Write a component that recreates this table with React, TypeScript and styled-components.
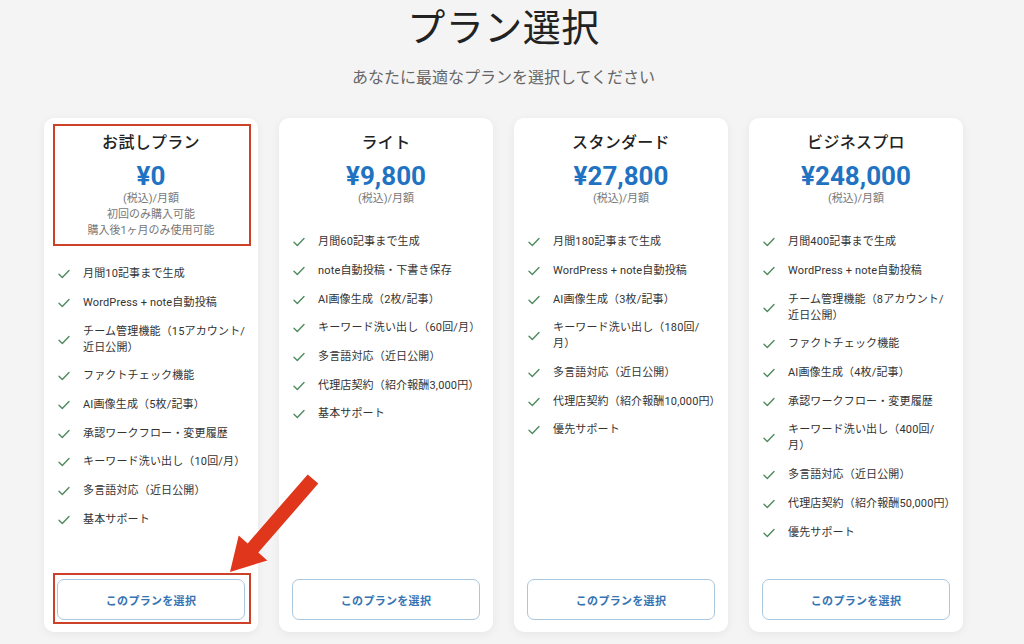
import React from "react";
import styled, { createGlobalStyle, css } from "styled-components";

const GlobalStyle = createGlobalStyle`
  html, body { margin: 0; padding: 0; }
  body {
    background: #f4f4f4;
    font-family: Roboto, "Noto Sans CJK JP", "Noto Sans", sans-serif;
    color: #333;
  }
`;

const Page = styled.div`
  position: relative;
  width: 1007px;
  height: 644px;
  padding-top: 5px;
  box-sizing: border-box;
  display: flex;
  flex-direction: column;
  align-items: center;
  overflow: hidden;
`;

const Title = styled.h1`
  margin: 0;
  font-size: 38px;
  line-height: 46px;
  font-weight: 400;
  color: #222;
  letter-spacing: 0.5px;
`;

const Subtitle = styled.p`
  margin: 15px 0 0;
  font-size: 16px;
  line-height: 24px;
  color: #666;
`;

const Cards = styled.div`
  margin-top: 28px;
  display: grid;
  grid-template-columns: repeat(4, 214px);
  gap: 21px;
  align-items: stretch;
`;

const Card = styled.div`
  background: #fff;
  border-radius: 10px;
  box-shadow: 0 2px 10px rgba(0, 0, 0, 0.06);
  padding: 14px 14px 12px;
  display: flex;
  flex-direction: column;
  height: 514px;
  box-sizing: border-box;
`;

const annotation = css`
  &::after {
    content: "";
    position: absolute;
    border: 2px solid #cc4128;
    pointer-events: none;
  }
`;

const Header = styled.div<{ $marked?: boolean }>`
  position: relative;
  display: flex;
  flex-direction: column;
  align-items: center;
  text-align: center;
  ${(p) =>
    p.$marked &&
    css`
      ${annotation}
      &::after {
        top: -8px;
        bottom: -7px;
        left: -5px;
        right: -7px;
      }
    `}
`;

const PlanName = styled.div`
  font-size: 16px;
  line-height: 22px;
  font-weight: 500;
  color: #222;
  letter-spacing: 0.3px;
`;

const Price = styled.div`
  margin-top: 8px;
  font-size: 26px;
  line-height: 29px;
  font-weight: 700;
  color: #1f73c2;
`;

const Note = styled.div`
  font-size: 11px;
  line-height: 16px;
  color: #777;
`;

const Features = styled.ul`
  list-style: none;
  margin: 21px -12px 32px 0;
  padding: 0;
`;

const Feature = styled.li`
  display: flex;
  align-items: center;
  gap: 13px;
  padding: 6.35px 0;
  font-size: 11px;
  line-height: 16px;
  color: #333;
`;

const Check = styled.svg`
  flex: 0 0 12px;
  width: 12px;
  height: 10px;
`;

const FeatureText = styled.span`
  flex: 1;
  min-width: 0;
  white-space: pre-line;
  letter-spacing: 0.15px;
`;

const SelectButton = styled.button<{ $marked?: boolean }>`
  position: relative;
  margin: auto -1px 0;
  height: 41px;
  border: 1px solid #a9c7de;
  border-radius: 7px;
  background: #fff;
  color: #3574b3;
  font-family: Roboto, "Noto Sans CJK JP", sans-serif;
  font-size: 11px;
  font-weight: 600;
  letter-spacing: 0.3px;
  cursor: pointer;
  ${(p) =>
    p.$marked &&
    css`
      ${annotation}
      &::after {
        top: -7px;
        bottom: -5px;
        left: -5px;
        right: -7px;
      }
    `}
`;

const ArrowLayer = styled.svg`
  position: absolute;
  left: 0;
  top: 0;
  width: 1024px;
  height: 644px;
  pointer-events: none;
`;

type Plan = {
  name: string;
  price: string;
  notes: string[];
  features: string[];
  marked?: boolean;
};

const plans: Plan[] = [
  {
    name: "お試しプラン",
    price: "¥0",
    notes: ["(税込)/月額", "初回のみ購入可能", "購入後1ヶ月のみ使用可能"],
    marked: true,
    features: [
      "月間10記事まで生成",
      "WordPress + note自動投稿",
      "チーム管理機能（15アカウント/\n近日公開）",
      "ファクトチェック機能",
      "AI画像生成（5枚/記事）",
      "承認ワークフロー・変更履歴",
      "キーワード洗い出し（10回/月）",
      "多言語対応（近日公開）",
      "基本サポート",
    ],
  },
  {
    name: "ライト",
    price: "¥9,800",
    notes: ["(税込)/月額"],
    features: [
      "月間60記事まで生成",
      "note自動投稿・下書き保存",
      "AI画像生成（2枚/記事）",
      "キーワード洗い出し（60回/月）",
      "多言語対応（近日公開）",
      "代理店契約（紹介報酬3,000円）",
      "基本サポート",
    ],
  },
  {
    name: "スタンダード",
    price: "¥27,800",
    notes: ["(税込)/月額"],
    features: [
      "月間180記事まで生成",
      "WordPress + note自動投稿",
      "AI画像生成（3枚/記事）",
      "キーワード洗い出し（180回/\n月）",
      "多言語対応（近日公開）",
      "代理店契約（紹介報酬10,000円）",
      "優先サポート",
    ],
  },
  {
    name: "ビジネスプロ",
    price: "¥248,000",
    notes: ["(税込)/月額"],
    features: [
      "月間400記事まで生成",
      "WordPress + note自動投稿",
      "チーム管理機能（8アカウント/\n近日公開）",
      "ファクトチェック機能",
      "AI画像生成（4枚/記事）",
      "承認ワークフロー・変更履歴",
      "キーワード洗い出し（400回/\n月）",
      "多言語対応（近日公開）",
      "代理店契約（紹介報酬50,000円）",
      "優先サポート",
    ],
  },
];

const CheckIcon = () => (
  <Check viewBox="0 0 12 10" fill="none">
    <path
      d="M1 5.2 L4.3 8.4 L11 1.4"
      stroke="#4f8a5e"
      strokeWidth="1.4"
      strokeLinecap="round"
      strokeLinejoin="round"
    />
  </Check>
);

export default function App() {
  return (
    <>
      <GlobalStyle />
      <Page>
        <Title>プラン選択</Title>
        <Subtitle>あなたに最適なプランを選択してください</Subtitle>
        <Cards>
          {plans.map((plan) => (
            <Card key={plan.name}>
              <Header $marked={plan.marked}>
                <PlanName>{plan.name}</PlanName>
                <Price>{plan.price}</Price>
                {plan.notes.map((n) => (
                  <Note key={n}>{n}</Note>
                ))}
              </Header>
              <Features>
                {plan.features.map((f) => (
                  <Feature key={f}>
                    <CheckIcon />
                    <FeatureText>{f}</FeatureText>
                  </Feature>
                ))}
              </Features>
              <SelectButton $marked={plan.marked}>このプランを選択</SelectButton>
            </Card>
          ))}
        </Cards>
        <ArrowLayer viewBox="0 0 1024 644">
          <polygon
            points="307.7,474.4 318.3,483.6 258.3,552.6 267.3,560.5 230,572 238.7,535.5 247.7,543.4"
            fill="#e0361c"
          />
        </ArrowLayer>
      </Page>
    </>
  );
}
